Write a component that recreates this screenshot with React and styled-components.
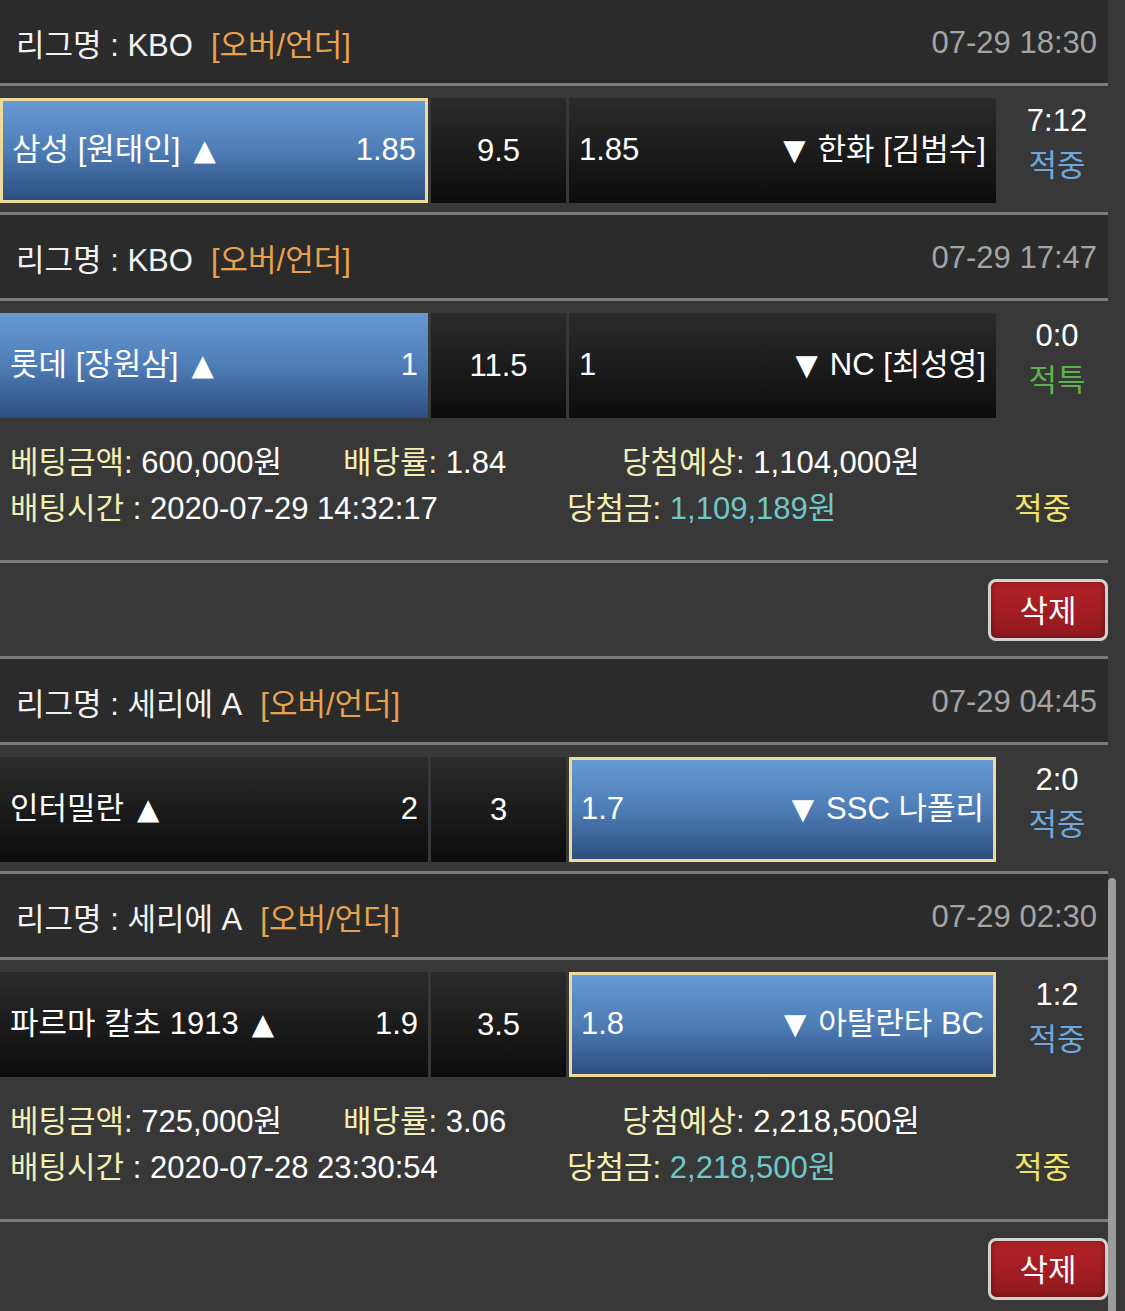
import React from 'react';
import styled, { createGlobalStyle } from 'styled-components';

const GlobalStyle = createGlobalStyle`
  html, body {
    margin: 0;
    padding: 0;
    background: #383838;
  }
  body {
    font-family: "Liberation Sans", "Noto Sans CJK KR", sans-serif;
    overflow: hidden;
  }
`;

const Page = styled.div`
  position: relative;
  width: 1125px;
  min-height: 1311px;
  background: #383838;
  color: #fff;
  font-size: 31px;
`;

const List = styled.div`
  width: 1108px;
`;

const Divider = styled.div`
  height: 3px;
  background: #7b7b7b;
`;

const GameHeader = styled.div`
  height: 83px;
  box-sizing: border-box;
  padding: 2px 11px 0 16px;
  display: flex;
  align-items: center;
  justify-content: space-between;
  background: #2b2b2b;
  color: #f2f2f2;
`;

const BetType = styled.span`
  margin-left: 18px;
  color: #e8a24e;
`;

const GameDate = styled.span`
  color: #a4a4a4;
`;

const MatchRow = styled.div`
  display: grid;
  grid-template-columns: 428px 135px 427px 1fr;
  column-gap: 3px;
  padding: 12px 0 9px;
`;

const Cell = styled.div`
  height: 105px;
  box-sizing: border-box;
  display: flex;
  align-items: center;
  padding: 0 ${(p) => (p.$framed ? 9 : 10)}px;
  border: ${(p) => (p.$framed ? '3px solid #eedb9c' : 'none')};
  background: ${(p) =>
    p.$picked
      ? 'linear-gradient(180deg, #6799d4 0%, #4e7db6 50%, #2c4e7f 100%)'
      : 'linear-gradient(180deg, #2b2b2b 0%, #1a1a1a 55%, #0c0c0c 100%)'};
  white-space: nowrap;
`;

const CellLine = styled.div`
  flex: 1;
  display: flex;
  align-items: baseline;
  justify-content: ${(p) => p.$align || 'space-between'};
  padding-bottom: ${(p) => (p.$low ? 0 : 8)}px;
`;

const Arrow = styled.span`
  font-family: "DejaVu Sans", sans-serif;
  font-size: 29px;
  margin: ${(p) => (p.$down ? '0 12px 0 0' : '0 0 0 13px')};
`;

const ScoreBox = styled.div`
  padding-left: 7px;
  text-align: center;
  line-height: 45px;
`;

const Result = styled.div`
  color: ${(p) => (p.$tone === 'special' ? '#5db14b' : '#6ea7de')};
`;

const Info = styled.div`
  padding: 13px 0 28px 10px;
  line-height: 46px;
  white-space: nowrap;
`;

const InfoLine = styled.div`
  display: flex;
`;

const InfoItem = styled.div`
  width: ${(p) => (p.$w ? `${p.$w}px` : 'auto')};
  flex-shrink: 0;
`;

const Label = styled.span`
  color: #f3eeb4;
`;

const Prize = styled.span`
  color: #70c7c8;
`;

const Status = styled.span`
  color: #f1e466;
`;

const ActionBar = styled.div`
  display: flex;
  justify-content: flex-end;
  padding: 16px 0 15px;
`;

const DeleteButton = styled.button`
  width: 120px;
  height: 62px;
  box-sizing: border-box;
  border: 3px solid #d2d2d2;
  border-radius: 8px;
  background: linear-gradient(180deg, #b22127 0%, #a41d23 50%, #8f191e 100%);
  box-shadow: inset 0 0 6px rgba(0, 0, 0, 0.35);
  color: #fff;
  font-family: inherit;
  font-size: 31px;
  padding: 0 0 4px;
`;

const ScrollThumb = styled.div`
  position: absolute;
  left: 1108px;
  top: 878px;
  width: 8px;
  height: 480px;
  border-radius: 4px;
  background: #9b9b9b;
`;

const slips = [
  {
    games: [
      {
        league: 'KBO', type: '[오버/언더]', date: '07-29 18:30',
        home: '삼성 [원태인]', homeOdds: '1.85', line: '9.5',
        away: '한화 [김범수]', awayOdds: '1.85',
        pick: 'home', framed: true, score: '7:12', result: '적중', tone: 'hit',
      },
      {
        league: 'KBO', type: '[오버/언더]', date: '07-29 17:47',
        home: '롯데 [장원삼]', homeOdds: '1', line: '11.5',
        away: 'NC [최성영]', awayOdds: '1',
        pick: 'home', framed: false, score: '0:0', result: '적특', tone: 'special',
      },
    ],
    amount: '600,000원', rate: '1.84', expected: '1,104,000원',
    time: '2020-07-29 14:32:17', prize: '1,109,189원', status: '적중',
  },
  {
    games: [
      {
        league: '세리에 A', type: '[오버/언더]', date: '07-29 04:45',
        home: '인터밀란', homeOdds: '2', line: '3',
        away: 'SSC 나폴리', awayOdds: '1.7',
        pick: 'away', framed: true, score: '2:0', result: '적중', tone: 'hit',
      },
      {
        league: '세리에 A', type: '[오버/언더]', date: '07-29 02:30',
        home: '파르마 칼초 1913', homeOdds: '1.9', line: '3.5',
        away: '아탈란타 BC', awayOdds: '1.8',
        pick: 'away', framed: true, score: '1:2', result: '적중', tone: 'hit',
      },
    ],
    amount: '725,000원', rate: '3.06', expected: '2,218,500원',
    time: '2020-07-28 23:30:54', prize: '2,218,500원', status: '적중',
  },
];

function Game({ game }) {
  const homePicked = game.pick === 'home';
  const awayPicked = game.pick === 'away';
  return (
    <>
      <GameHeader>
        <span>
          리그명 : {game.league}
          <BetType>{game.type}</BetType>
        </span>
        <GameDate>{game.date}</GameDate>
      </GameHeader>
      <Divider />
      <MatchRow>
        <Cell $picked={homePicked} $framed={homePicked && game.framed}>
          <CellLine>
            <span>
              {game.home}
              <Arrow>▲</Arrow>
            </span>
            <span>{game.homeOdds}</span>
          </CellLine>
        </Cell>
        <Cell>
          <CellLine $align="center" $low>
            <span>{game.line}</span>
          </CellLine>
        </Cell>
        <Cell $picked={awayPicked} $framed={awayPicked && game.framed}>
          <CellLine>
            <span>{game.awayOdds}</span>
            <span>
              <Arrow $down>▼</Arrow>
              {game.away}
            </span>
          </CellLine>
        </Cell>
        <ScoreBox>
          <div>{game.score}</div>
          <Result $tone={game.tone}>{game.result}</Result>
        </ScoreBox>
      </MatchRow>
    </>
  );
}

function Slip({ slip }) {
  return (
    <>
      {slip.games.map((g, i) => (
        <React.Fragment key={g.date}>
          {i > 0 && <Divider />}
          <Game game={g} />
        </React.Fragment>
      ))}
      <Info>
        <InfoLine>
          <InfoItem $w={333}>
            <Label>베팅금액:</Label> {slip.amount}
          </InfoItem>
          <InfoItem $w={279}>
            <Label>배당률:</Label> {slip.rate}
          </InfoItem>
          <InfoItem>
            <Label>당첨예상:</Label> {slip.expected}
          </InfoItem>
        </InfoLine>
        <InfoLine>
          <InfoItem $w={557}>
            <Label>배팅시간</Label> : {slip.time}
          </InfoItem>
          <InfoItem $w={447}>
            <Label>당첨금:</Label> <Prize>{slip.prize}</Prize>
          </InfoItem>
          <InfoItem>
            <Status>{slip.status}</Status>
          </InfoItem>
        </InfoLine>
      </Info>
      <Divider />
      <ActionBar>
        <DeleteButton>삭제</DeleteButton>
      </ActionBar>
      <Divider />
    </>
  );
}

export default function App() {
  return (
    <Page>
      <GlobalStyle />
      <List>
        {slips.map((s) => (
          <Slip key={s.time} slip={s} />
        ))}
      </List>
      <ScrollThumb />
    </Page>
  );
}
